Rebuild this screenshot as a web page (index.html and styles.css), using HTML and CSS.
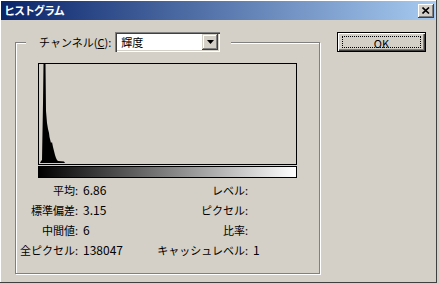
FILE: index.html
```html
<!DOCTYPE html>
<html lang="ja">
<head>
  <meta charset="UTF-8">
  <title>ヒストグラム</title>
  <link rel="stylesheet" href="styles.css">
</head>
<body>
  <div class="window">
    <div class="titlebar">
      <span class="title">ヒストグラム</span>
      <span class="close">
        <svg width="8" height="7" viewBox="0 0 8 7"><path d="M0.5 0.5 L7 6.5 M7 0.5 L0.5 6.5" stroke="#000" stroke-width="1.6" fill="none"/></svg>
      </span>
    </div>

    <div class="content">
      <fieldset class="group">
        <legend class="channel">
          <label>チャンネル(<u>C</u>):</label>
          <div class="select">
            <span class="select-text">輝度</span>
            <span class="drop">
              <svg width="7" height="4" viewBox="0 0 7 4"><path d="M0 0 H7 L3.5 4 Z" fill="#000"/></svg>
            </span>
          </div>
        </legend>

        <svg class="histogram" width="259" height="115" viewBox="0 0 259 115">
          <defs>
            <linearGradient id="ramp" x1="0" x2="1" y1="0" y2="0">
              <stop offset="0" stop-color="#000"/>
              <stop offset="1" stop-color="#fff"/>
            </linearGradient>
          </defs>
          <rect x="0.5" y="0.5" width="258" height="101" fill="none" stroke="#000"/>
          <polygon fill="#000" points="2,100 3,98 4,97 5,40 5.5,1 7.5,1 8,48 9,60 10,66 11,70 11.5,74 12,76 13,80 14,79 15,84 16,88 17,92 18,95 19,97 20,98 26,98.5 27,100"/>
          <rect x="0.5" y="103.5" width="258" height="11" fill="url(#ramp)" stroke="#000"/>
        </svg>

        <div class="stats">
          <span class="k">平均:</span><span class="v">6.86</span>
          <span class="k">レベル:</span><span class="v"></span>
          <span class="k">標準偏差:</span><span class="v">3.15</span>
          <span class="k">ピクセル:</span><span class="v"></span>
          <span class="k">中間値:</span><span class="v">6</span>
          <span class="k">比率:</span><span class="v"></span>
          <span class="k">全ピクセル:</span><span class="v">138047</span>
          <span class="k">キャッシュレベル:</span><span class="v">1</span>
        </div>
      </fieldset>

      <div class="buttons">
        <button class="ok"><span class="focus">OK</span></button>
      </div>
    </div>
  </div>
</body>
</html>
```

FILE: styles.css
```css
body {
  margin: 0;
  background: #d4d0c8;
  font-family: "Noto Sans CJK JP", "Noto Sans", sans-serif;
  font-size: 11px;
  color: #000;
}
.window {
  width: 437px;
  height: 283px;
  box-sizing: border-box;
  padding: 1px 2px 2px 1px;
  background: #d4d0c8;
  box-shadow: inset -1px -1px #404040, inset 1px 1px #fff;
}
.titlebar {
  height: 19px;
  display: flex;
  align-items: center;
  justify-content: space-between;
  padding: 0 1px 0 3px;
  background: linear-gradient(90deg, #0a246a, #a6caf0);
  color: #fff;
}
.title {
  font-weight: bold;
  letter-spacing: -1px;
  line-height: 19px;
}
.close {
  width: 16px;
  height: 14px;
  display: flex;
  align-items: center;
  justify-content: center;
  background: #d4d0c8;
  box-shadow: inset -1px -1px #404040, inset 1px 1px #fff, inset -2px -2px #808080;
}
.content {
  display: flex;
  align-items: flex-start;
  padding: 12px 0 0 14px;
}
.group {
  width: 305px;
  box-sizing: border-box;
  margin: 0;
  padding: 0 0 13px;
  min-width: 0;
  border: 1px solid #808080;
  box-shadow: inset 1px 1px #fff, 1px 1px #fff;
}
.channel {
  display: flex;
  align-items: center;
  gap: 4px;
  margin-left: 10px;
  padding: 0 11px 0 13px;
  background: #d4d0c8;
  line-height: 20px;
}
.select {
  width: 105px;
  height: 20px;
  box-sizing: border-box;
  padding: 2px;
  display: flex;
  background: #fff;
  box-shadow: inset 1px 1px #808080, inset 2px 2px #404040, inset -1px -1px #fff, inset -2px -2px #d4d0c8;
}
.select-text {
  flex: 1;
  padding-left: 4px;
  line-height: 16px;
}
.drop {
  width: 16px;
  height: 16px;
  display: flex;
  align-items: center;
  justify-content: center;
  background: #d4d0c8;
  box-shadow: inset -1px -1px #404040, inset 1px 1px #d4d0c8, inset -2px -2px #808080, inset 2px 2px #fff;
}
.histogram {
  display: block;
  margin: 11px 0 0 22px;
}
.stats {
  display: grid;
  grid-template-columns: 61px 65px 105px 1fr;
  grid-auto-rows: 20px;
  align-items: center;
  margin-top: 2px;
  padding-left: 1px;
  line-height: 20px;
  white-space: nowrap;
}
.k {
  text-align: right;
}
.v {
  padding-left: 5px;
  font-size: 12px;
}
.buttons {
  margin-left: 17px;
}
.ok {
  width: 89px;
  height: 20px;
  padding: 3px 4px;
  display: flex;
  font: inherit;
  background: #d4d0c8;
  border: 1px solid #000;
  box-shadow: inset 1px 1px #fff, inset -1px -1px #404040, inset -2px -2px #808080;
}
.focus {
  flex: 1;
  border: 1px dotted #000;
  line-height: 12px;
  text-align: center;
}
```
